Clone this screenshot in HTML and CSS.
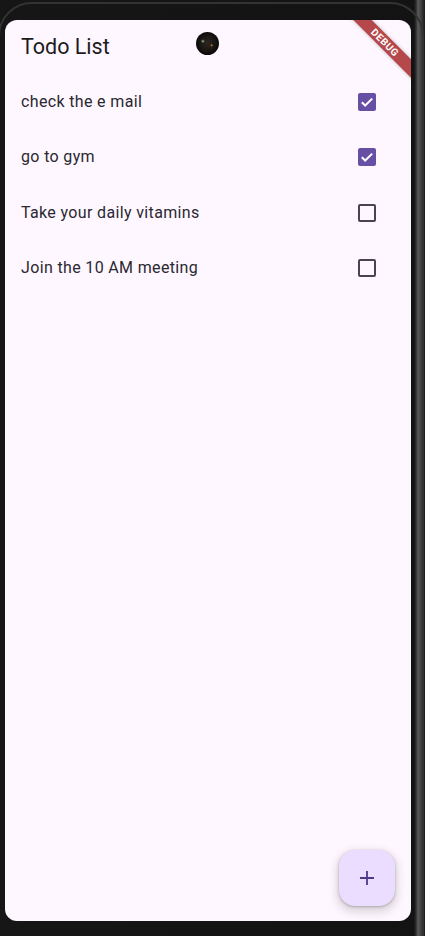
FILE: index.html
```html
<!DOCTYPE html>
<html lang="en">
<head>
<meta charset="utf-8">
<title>Todo List</title>
<link rel="stylesheet" href="styles.css">
</head>
<body>
<div class="device">
  <div class="device-rim"></div>
  <div class="screen">
    <header class="app-bar">
      <h1 class="app-title">Todo List</h1>
    </header>
    <ul class="todo-list">
      <li class="todo-item">
        <span class="todo-text">check the e mail</span>
        <span class="check-wrap"><span class="checkbox checked">
          <svg viewBox="0 0 18 18" width="18" height="18"><path d="M3.8 9.2 L7.2 12.5 L14.2 5.6" fill="none" stroke="#fff" stroke-width="2"/></svg>
        </span></span>
      </li>
      <li class="todo-item">
        <span class="todo-text">go to gym</span>
        <span class="check-wrap"><span class="checkbox checked">
          <svg viewBox="0 0 18 18" width="18" height="18"><path d="M3.8 9.2 L7.2 12.5 L14.2 5.6" fill="none" stroke="#fff" stroke-width="2"/></svg>
        </span></span>
      </li>
      <li class="todo-item">
        <span class="todo-text">Take your daily vitamins</span>
        <span class="check-wrap"><span class="checkbox"></span></span>
      </li>
      <li class="todo-item">
        <span class="todo-text">Join the 10 AM meeting</span>
        <span class="check-wrap"><span class="checkbox"></span></span>
      </li>
    </ul>
    <button class="fab" aria-label="Add">
      <svg viewBox="0 0 24 24" width="24" height="24"><path d="M12 5 V19 M5 12 H19" stroke="#4f378b" stroke-width="1.8" fill="none"/></svg>
    </button>
    <div class="debug-banner"><span>DEBUG</span></div>
  </div>
  <div class="camera"></div>
</div>
</body>
</html>
```
FILE: styles.css
```css
html, body {
  margin: 0;
  padding: 0;
}
body {
  width: 425px;
  height: 936px;
  overflow: hidden;
  background: #141414;
  font-family: Roboto, "Noto Sans", sans-serif;
}
.device {
  position: relative;
  width: 425px;
  height: 936px;
  box-sizing: border-box;
  padding: 20px 14px 15px 5px;
  background: linear-gradient(to right, #161616 0, #131313 414px, #2e2e2e 416px, #5a5a5a 418px, #4a4a4a 420px, #2c2c2c 423px, #1a1a1a 425px);
}
.device-rim {
  position: absolute;
  left: -2px;
  top: 2px;
  right: 1px;
  bottom: -40px;
  border: 2px solid #333;
  border-radius: 34px;
  pointer-events: none;
}
.screen {
  position: relative;
  width: 406px;
  height: 901px;
  background: #fef7ff;
  border-radius: 12px;
  overflow: hidden;
}
.app-bar {
  height: 54px;
  display: flex;
  align-items: center;
  padding-left: 16px;
}
.app-title {
  margin: 0;
  font-size: 21.5px;
  font-weight: 400;
  color: #1d1b20;
  line-height: 28px;
}
.todo-list {
  list-style: none;
  margin: 0;
  padding: 0;
}
.todo-item {
  height: 55.5px;
  display: flex;
  align-items: center;
  padding: 0 24px 0 16px;
}
.todo-text {
  flex: 1;
  font-size: 16px;
  letter-spacing: 0.35px;
  color: #2a2830;
  line-height: 24px;
}
.check-wrap {
  width: 40px;
  height: 40px;
  display: flex;
  align-items: center;
  justify-content: center;
}
.checkbox {
  width: 18px;
  height: 18px;
  box-sizing: border-box;
  border: 2px solid #49454f;
  border-radius: 2px;
  display: block;
}
.checkbox.checked {
  border: none;
  background: #6750a4;
}
.checkbox svg {
  display: block;
}
.fab {
  position: absolute;
  right: 16px;
  bottom: 15px;
  width: 56px;
  height: 56px;
  border: none;
  border-radius: 16px;
  background: #eaddff;
  display: flex;
  align-items: center;
  justify-content: center;
  padding: 0;
  box-shadow: 0 4px 8px 3px rgba(0, 0, 0, 0.12), 0 1px 3px rgba(0, 0, 0, 0.25);
}
.fab svg {
  display: block;
}
.debug-banner {
  position: absolute;
  left: 320px;
  top: 16px;
  width: 120px;
  height: 13px;
  background: #b5484b;
  transform: rotate(45deg);
  display: flex;
  align-items: center;
  justify-content: center;
  box-shadow: 0 0 4px rgba(0, 0, 0, 0.25);
}
.debug-banner span {
  color: #fff;
  font-family: Roboto, "DejaVu Sans", sans-serif;
  font-weight: 700;
  font-size: 10px;
  letter-spacing: 0.5px;
  line-height: 13px;
}
.camera {
  position: absolute;
  left: 196px;
  top: 32px;
  width: 23px;
  height: 23px;
  border-radius: 50%;
  background:
    radial-gradient(circle at 30% 40%, rgba(160, 200, 160, 0.9) 0, rgba(160, 200, 160, 0) 2px),
    radial-gradient(circle at 68% 58%, rgba(230, 140, 60, 0.95) 0, rgba(230, 140, 60, 0) 1.5px),
    radial-gradient(circle at 50% 48%, #2e2620 0, #1a1614 45%, #070707 75%, #000 100%);
}
```
